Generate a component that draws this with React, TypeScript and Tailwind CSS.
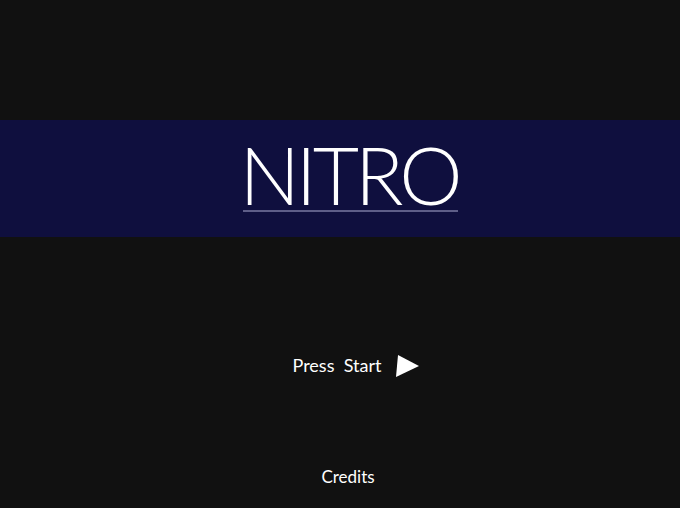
const App = () => {
  return (
    <div
      className="w-[680px] h-[508px] bg-[#111111] flex flex-col text-white overflow-hidden"
      style={{ fontFamily: "Lato, 'Open Sans', sans-serif" }}
    >
      <div className="h-[120px] shrink-0" />
      <div className="h-[117px] shrink-0 bg-[#0f0f3e] flex justify-center pl-[22px]">
        <div className="flex flex-col items-center pt-[19px]">
          <h1 className="text-[80px] leading-[70px] font-light tracking-[-4px] pr-[4px]">NITRO</h1>
          <div className="w-[215px] h-[2px] bg-[#5e5e88] mt-[1px]" />
        </div>
      </div>
      <div className="h-[116px] shrink-0" />
      <div className="flex justify-center items-start pl-[32px] gap-[15px] h-[24px] shrink-0">
        <span className="text-[18px] leading-[24px] font-normal">Press&nbsp; Start</span>
        <svg width="23" height="22" viewBox="0 0 23 22" className="mt-[2px]">
          <polygon points="2,0 23,11 0,22" fill="#ffffff" />
        </svg>
      </div>
      <div className="h-[88px] shrink-0" />
      <div className="flex justify-center pl-[16px] h-[24px] shrink-0">
        <span className="text-[17px] leading-[24px] font-normal">Credits</span>
      </div>
    </div>
  );
};

export default App;
